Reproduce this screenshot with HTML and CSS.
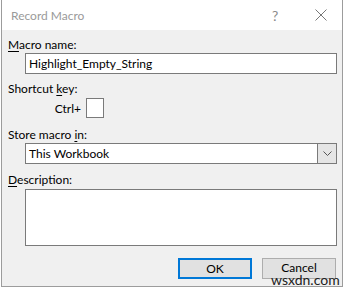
FILE: index.html
```html
<!DOCTYPE html>
<html>
<head>
<meta charset="utf-8">
<link rel="stylesheet" href="styles.css">
</head>
<body>
<div class="dialog">
  <div class="titlebar">
    <span class="title">Record Macro</span>
    <span class="help">?</span>
    <svg class="close" width="12" height="12" viewBox="0 0 12 12"><path d="M0.5 0.5 L11.5 11.5 M11.5 0.5 L0.5 11.5" stroke="#777" stroke-width="1" fill="none"/></svg>
  </div>
  <div class="content">
    <div class="label"><u>M</u>acro name:</div>
    <div class="field input">Highlight_Empty_String</div>
    <div class="label gap7">Shortcut <u>k</u>ey:</div>
    <div class="shortcut">
      <span class="ctrl">Ctrl+</span>
      <span class="keybox"></span>
    </div>
    <div class="label gap9">Store macro <u>i</u>n:</div>
    <div class="field select">
      <span class="seltext">This Workbook</span>
      <span class="drop"><svg width="9" height="6" viewBox="0 0 9 6"><path d="M0.5 0.5 L4.5 4.5 L8.5 0.5" stroke="#555" stroke-width="1" fill="none"/></svg></span>
    </div>
    <div class="label gap8"><u>D</u>escription:</div>
    <div class="field textarea"></div>
    <div class="buttons">
      <div class="btn ok">OK</div>
      <div class="btn cancel"><span class="btntext">Cancel</span><span class="watermark">wsxdn.com</span></div>
    </div>
  </div>
</div>
</body>
</html>
```

FILE: styles.css
```css
* { box-sizing: border-box; }
html, body { margin: 0; padding: 0; background: #fff; }
body {
  font-family: "Lato", "Noto Sans", sans-serif;
  font-size: 12px;
  color: #000;
  width: 344px;
  height: 288px;
  overflow: hidden;
}
.dialog {
  margin-left: 1px;
  width: 342px;
  height: 287px;
  border: 1px solid #9c9c9c;
  border-top: none;
  display: flex;
  flex-direction: column;
  background: #f0f0f0;
}
.titlebar {
  height: 30px;
  background: #fff;
  display: flex;
  align-items: center;
  padding-left: 9px;
}
.title { color: #9a9a9a; flex: 1; }
.help { color: #8a8a8a; font-size: 14px; width: 12px; margin-right: 31px; }
.close { margin-right: 15px; }
.content {
  flex: 1;
  padding: 7px 0 0 6px;
  display: flex;
  flex-direction: column;
}
.label { height: 16px; line-height: 16px; }
.label u { text-decoration-thickness: 1px; text-underline-offset: 2px; }
.gap7 { margin-top: 7px; }
.gap8 { margin-top: 8px; }
.gap9 { margin-top: 9px; }
.field {
  margin-left: 17px;
  width: 312px;
  background: #fff;
  border: 1px solid #7a7a7a;
}
.input {
  height: 21px;
  line-height: 19px;
  padding-left: 3px;
}
.shortcut {
  display: flex;
  align-items: center;
  margin-top: 1px;
  height: 20px;
}
.ctrl { width: 73px; text-align: right; margin-right: 5px; }
.keybox {
  width: 18px;
  height: 20px;
  background: #fff;
  border: 1px solid #7a7a7a;
}
.select {
  height: 21px;
  display: flex;
  align-items: stretch;
}
.seltext { flex: 1; line-height: 19px; padding-left: 3px; }
.drop {
  width: 19px;
  background: #e5e5e5;
  border-left: 1px solid #7a7a7a;
  display: flex;
  align-items: center;
  justify-content: center;
}
.textarea { margin-top: 1px; height: 57px; }
.buttons {
  margin-top: 12px;
  display: flex;
  gap: 10px;
  padding-left: 170px;
}
.btn {
  width: 74px;
  height: 21px;
  display: flex;
  align-items: center;
  justify-content: center;
  background: #e1e1e1;
  border: 1px solid #adadad;
  position: relative;
}
.ok { border: 2px solid #0078d7; }
.btntext { margin-top: -2px; }
.watermark {
  position: absolute;
  left: 8px;
  top: 14px;
  font-size: 14px;
  color: #222;
  line-height: 13px;
}
```
